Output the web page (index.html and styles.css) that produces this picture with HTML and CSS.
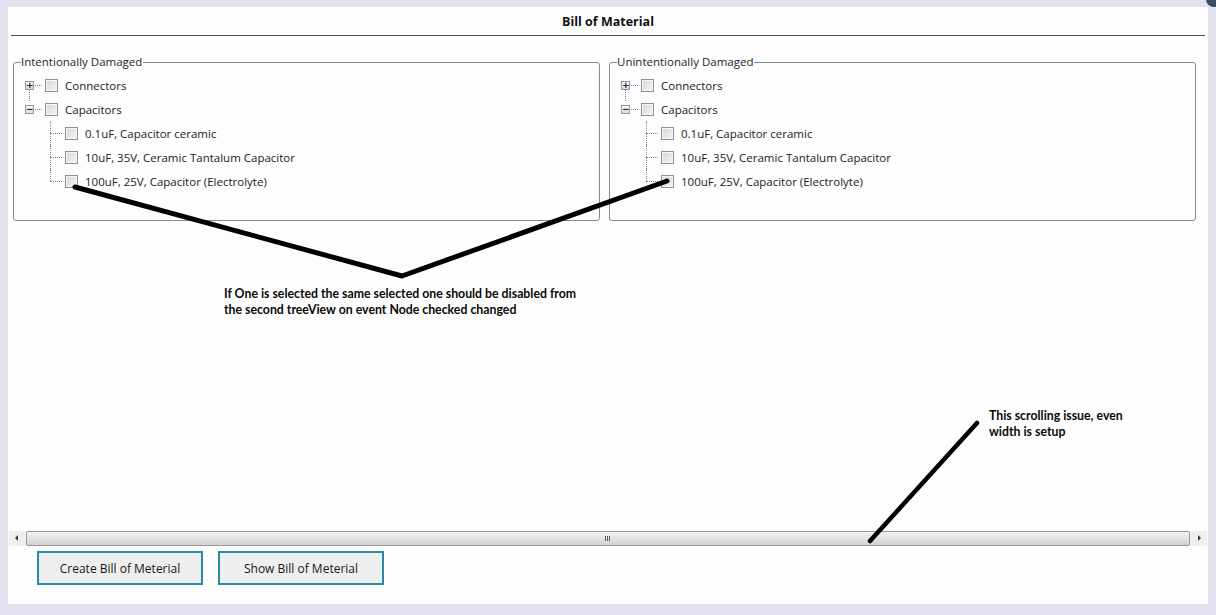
FILE: index.html
```html
<!DOCTYPE html>
<html>
<head>
<meta charset="utf-8">
<link rel="stylesheet" href="styles.css">
</head>
<body>
<div class="corner"></div>
<div class="window">
  <header class="title-bar"><h1 class="title">Bill of Material</h1></header>

  <div class="groups">
    <fieldset class="group">
      <legend class="group-label">Intentionally Damaged</legend>
      <ul class="tree">
        <li class="node root">
          <span class="exp">+</span><span class="hline"></span><span class="chk"></span><span class="label">Connectors</span>
        </li>
        <li class="node root last">
          <span class="exp">−</span><span class="hline"></span><span class="chk"></span><span class="label">Capacitors</span>
        </li>
        <li class="node child"><span class="hline long"></span><span class="chk"></span><span class="label">0.1uF, Capacitor ceramic</span></li>
        <li class="node child"><span class="hline long"></span><span class="chk"></span><span class="label">10uF, 35V, Ceramic Tantalum Capacitor</span></li>
        <li class="node child end"><span class="hline long"></span><span class="chk"></span><span class="label">100uF, 25V, Capacitor (Electrolyte)</span></li>
      </ul>
    </fieldset>

    <fieldset class="group">
      <legend class="group-label">Unintentionally Damaged</legend>
      <ul class="tree">
        <li class="node root">
          <span class="exp">+</span><span class="hline"></span><span class="chk"></span><span class="label">Connectors</span>
        </li>
        <li class="node root last">
          <span class="exp">−</span><span class="hline"></span><span class="chk"></span><span class="label">Capacitors</span>
        </li>
        <li class="node child"><span class="hline long"></span><span class="chk"></span><span class="label">0.1uF, Capacitor ceramic</span></li>
        <li class="node child"><span class="hline long"></span><span class="chk"></span><span class="label">10uF, 35V, Ceramic Tantalum Capacitor</span></li>
        <li class="node child end"><span class="hline long"></span><span class="chk"></span><span class="label">100uF, 25V, Capacitor (Electrolyte)</span></li>
      </ul>
    </fieldset>
  </div>

  <div class="spacer"></div>

  <div class="hscroll">
    <span class="arrow left"></span>
    <span class="thumb"><span class="grip"></span></span>
    <span class="arrow right"></span>
  </div>

  <div class="actions">
    <button class="btn">Create Bill of Meterial</button>
    <button class="btn">Show Bill of Meterial</button>
  </div>

  <svg class="marks" width="1216" height="615" viewBox="0 0 1216 615">
    <polyline points="75,187 402,276 667,181" fill="none" stroke="#000" stroke-width="5" stroke-linecap="round" stroke-linejoin="round"/>
    <line x1="870" y1="541" x2="977" y2="423" stroke="#000" stroke-width="4.5" stroke-linecap="round"/>
  </svg>
  <p class="note note-a">If One is selected the same selected one should be disabled from<br>the second treeView on event Node checked changed</p>
  <p class="note note-b">This scrolling issue, even<br>width is setup</p>
</div>
</body>
</html>
```

FILE: styles.css
```css
html, body {
  margin: 0;
  padding: 0;
}

body {
  width: 1216px;
  height: 615px;
  background: #e2e2ee;
  font-family: "Open Sans", "Noto Sans", sans-serif;
  color: #1a1a1a;
  overflow: hidden;
  position: relative;
  box-sizing: border-box;
  padding: 7px 8px 11px 8px;
}

.corner {
  position: absolute;
  right: -6px;
  top: -9px;
  width: 16px;
  height: 16px;
  border-radius: 50%;
  background: #3d4a66;
}

.window {
  height: 597px;
  background: #fdfdfd;
  display: flex;
  flex-direction: column;
}

.title-bar {
  height: 28px;
  margin: 0 3px;
  border-bottom: 1px solid #4e4e4e;
  display: flex;
  align-items: center;
  justify-content: center;
}

.title {
  margin: 0;
  font-size: 12.5px;
  font-weight: 700;
  color: #111;
  padding-top: 1px;
}

.groups {
  display: flex;
  gap: 9px;
  padding: 19px 12px 0 5px;
}

.group {
  flex: 1;
  margin: 0;
  height: 166px;
  box-sizing: border-box;
  border: 1px solid #7f8b90;
  border-radius: 3px;
  padding: 4px 0 0 11px;
  min-width: 0;
}

.group-label {
  font-size: 11.5px;
  padding: 0 1px 0 0;
  margin-left: -4px;
  color: #1e1e1e;
  line-height: 14px;
}

.tree {
  list-style: none;
  margin: 0;
  padding: 0;
}

.node {
  height: 24px;
  display: flex;
  align-items: center;
  font-size: 11.5px;
  position: relative;
}

.exp {
  width: 7px;
  height: 7px;
  border: 1px solid #8f99a3;
  background: linear-gradient(#ffffff, #d6dbe1);
  font-size: 9px;
  line-height: 7px;
  text-align: center;
  color: #1e2b3a;
  font-family: "DejaVu Sans", sans-serif;
  font-weight: 700;
  overflow: hidden;
  flex: none;
}

.hline {
  width: 7px;
  margin: 0 3px 0 1px;
  border-top: 1px dotted #8a8a8a;
  flex: none;
}

.hline.long {
  width: 12px;
  margin-left: 25px;
  margin-right: 3px;
}

.root.last::before {
  content: "";
  position: absolute;
  left: 4px;
  top: -8px;
  height: 12px;
  border-left: 1px dotted #8a8a8a;
}

.child::before {
  content: "";
  position: absolute;
  left: 25px;
  top: 0;
  height: 24px;
  border-left: 1px dotted #8a8a8a;
}

.child.end::before {
  height: 12px;
}

.chk {
  width: 11px;
  height: 11px;
  border: 1px solid #8e8f8f;
  background: linear-gradient(135deg, #d6d6d6, #f4f4f4);
  box-shadow: inset 0 0 0 1px #f6f6f6;
  margin-right: 7px;
  flex: none;
}

.label {
  white-space: nowrap;
  color: #1b1b1b;
}

.spacer {
  flex: 1;
}

.hscroll {
  height: 15px;
  margin: 0 1px 0 1px;
  background: #f0f0f0;
  display: flex;
  align-items: stretch;
}

.arrow {
  width: 17px;
  position: relative;
  flex: none;
}

.arrow::after {
  content: "";
  position: absolute;
  top: 4px;
  border-top: 3.5px solid transparent;
  border-bottom: 3.5px solid transparent;
}

.arrow.left::after {
  left: 6px;
  border-right: 3px solid #3a3a3a;
}

.arrow.right::after {
  left: 8px;
  border-left: 3px solid #3a3a3a;
}

.thumb {
  flex: 1;
  box-sizing: border-box;
  border: 1px solid #979797;
  border-radius: 2px;
  background: linear-gradient(#f2f2f2, #e3e3e3 50%, #d2d2d2);
  display: flex;
  align-items: center;
  justify-content: center;
}

.grip {
  width: 6px;
  height: 5px;
  background: repeating-linear-gradient(90deg, #5a5a5a 0 1px, transparent 1px 2px);
}

.actions {
  display: flex;
  gap: 15px;
  padding: 5px 0 0 29px;
  height: 58px;
  box-sizing: border-box;
}

.btn {
  width: 166px;
  height: 34px;
  border: 2px solid #2a8aa6;
  background: #eeeeee;
  font-family: "Open Sans", "Noto Sans", sans-serif;
  font-size: 12px;
  color: #161616;
  padding: 0;
}

.marks {
  position: absolute;
  left: 0;
  top: 0;
  pointer-events: none;
}

.note {
  position: absolute;
  margin: 0;
  font-family: Lato, "Open Sans", sans-serif;
  font-weight: 700;
  font-size: 12.3px;
  line-height: 16px;
  color: #0a0a0a;
}

.note-a {
  left: 224px;
  top: 286px;
}

.note-b {
  left: 989px;
  top: 408px;
}
```
